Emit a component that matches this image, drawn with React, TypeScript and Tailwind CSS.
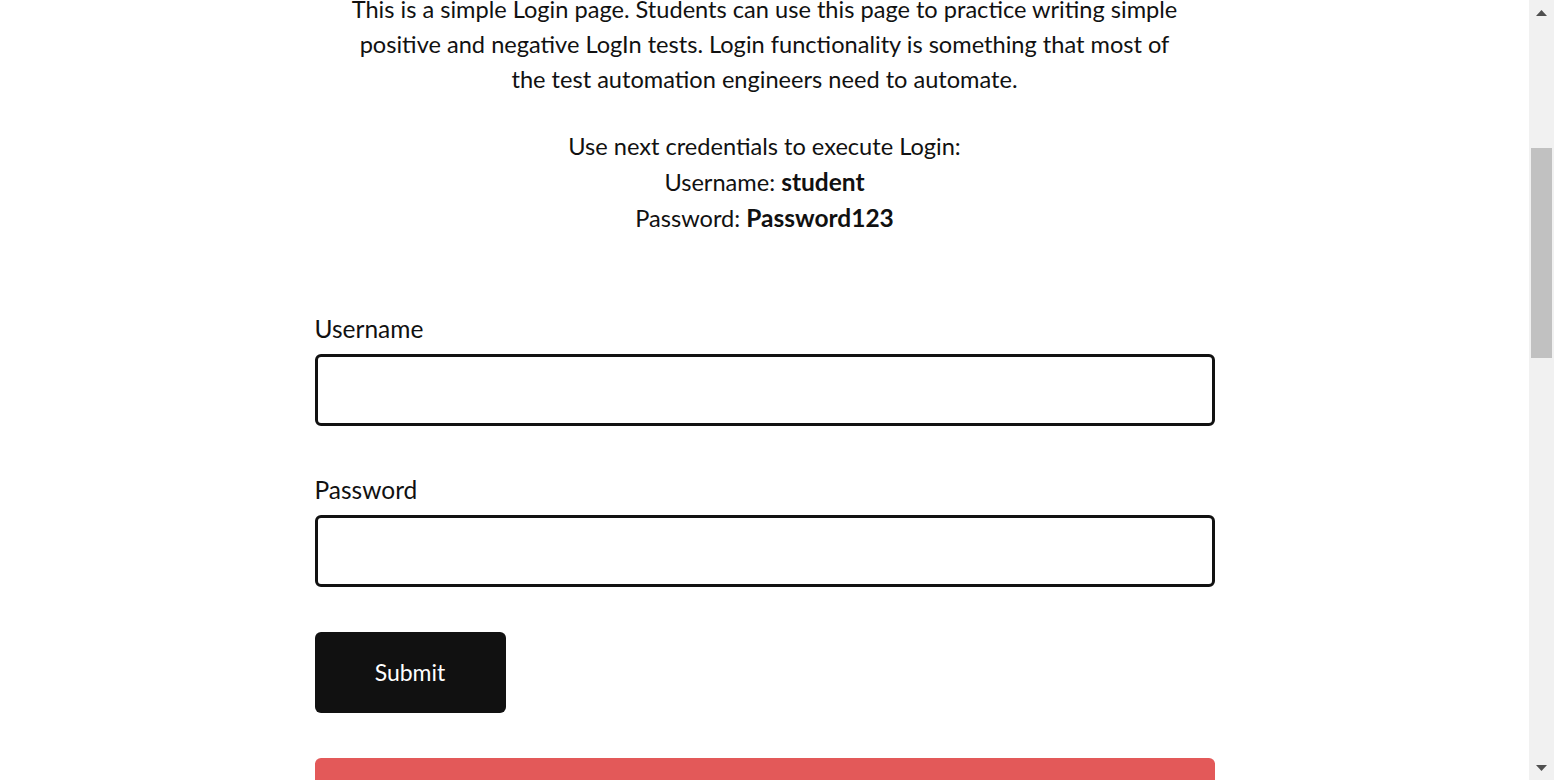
import React from "react";

const Scrollbar = () => (
  <div className="w-[25px] h-full bg-[#f1f1f1] flex flex-col items-center shrink-0">
    <div className="h-[25px] w-full flex items-center justify-center">
      <svg width="11" height="6" viewBox="0 0 11 6">
        <polygon points="5.5,0 11,6 0,6" fill="#505050" />
      </svg>
    </div>
    <div className="h-[123px]" />
    <div className="w-[21px] h-[210px] bg-[#c1c1c1]" />
    <div className="flex-1" />
    <div className="h-[25px] w-full flex items-center justify-center">
      <svg width="11" height="6" viewBox="0 0 11 6">
        <polygon points="0,0 11,0 5.5,6" fill="#505050" />
      </svg>
    </div>
  </div>
);

const Field = ({ label, type }: { label: string; type: string }) => (
  <div className="flex flex-col">
    <label className="text-[24.5px] leading-[33px] text-[#111]">{label}</label>
    <input
      type={type}
      className="mt-[9px] h-[72px] w-full rounded-[6px] border-[3px] border-[#111] bg-white px-4 outline-none"
    />
  </div>
);

export default function App() {
  return (
    <div
      className="flex h-[780px] w-full overflow-hidden bg-white"
      style={{ fontFamily: "Lato, 'Open Sans', sans-serif" }}
    >
      <main className="flex-1 overflow-hidden">
        <div className="mt-[-8px] flex flex-col items-center text-[#111]">
          <p className="w-[836px] text-center text-[23.6px] leading-[35px]">
            This is a simple Login page. Students can use this page to practice writing simple
            positive and negative LogIn tests. Login functionality is something that most of
            the test automation engineers need to automate.
          </p>
          <p className="mt-[31px] text-center text-[23.6px] leading-[36px]">
            Use next credentials to execute Login:
            <br />
            Username: <b className="text-[24.5px]">student</b>
            <br />
            Password: <b className="text-[24.5px]">Password123</b>
          </p>
          <form className="mt-[76px] flex w-[900px] flex-col">
            <Field label="Username" type="text" />
            <div className="mt-[47px]">
              <Field label="Password" type="password" />
            </div>
            <div className="mt-[45px]">
              <button
                type="button"
                className="h-[81px] w-[191px] rounded-[6px] bg-[#111] text-[23px] text-white"
              >
                Submit
              </button>
            </div>
            <div className="mt-[45px] h-[80px] w-full rounded-[6px] bg-[#e35959]" />
          </form>
        </div>
      </main>
      <Scrollbar />
    </div>
  );
}
